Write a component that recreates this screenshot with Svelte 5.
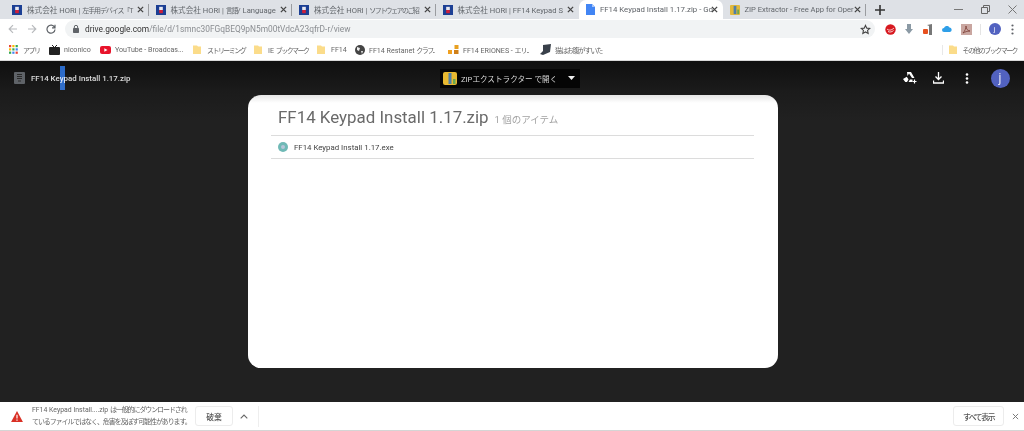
<script>
  const tabs = [
    { pre: '株式会社 HORI | ', jp: '左手用デバイス「T', icon: 'hori' },
    { pre: '株式会社 HORI | ', jp: '言語', post: '/ Language', icon: 'hori' },
    { pre: '株式会社 HORI | ', jp: 'ソフトウェアのご紹', tight: true, icon: 'hori' },
    { pre: '株式会社 HORI | ', post: 'FF14 Keypad S', icon: 'hori' },
    { pre: 'FF14 Keypad Install 1.17.zip - Go', icon: 'doc', active: true },
    { pre: 'ZIP Extractor - Free App for Oper', icon: 'zip' }
  ];
  const marks = [
    { label: 'niconico', icon: 'tv', w: 51 },
    { label: 'YouTube - Broadcas...', icon: 'yt', w: 93 },
    { jp: 'ストリーミング', tight: true, icon: 'folder', w: 61 },
    { label: 'IE ', jp: 'ブックマーク', tight: true, icon: 'folder', w: 63 },
    { label: 'FF14', icon: 'folder', w: 38 },
    { label: 'FF14 Restanet ', jp: 'クラフ...', tight: true, icon: 'globe', w: 93 },
    { label: 'FF14 ERIONES - ', jp: 'エリ...', icon: 'blocks', w: 92 },
    { jp: '猫はお腹がすいた', icon: 'cat', w: 80 }
  ];
</script>

{#snippet folder()}
  <svg class="folder" width="8" height="9" viewBox="0 0 8 9"><path d="M0 .5h4l1 1h3V9H0z" fill="#fbdc8a" /></svg>
{/snippet}

<div class="page">
  <div class="tabbar">
    {#each tabs as t}
      <div class="tab" class:active={t.active}>
        {#if t.icon === 'hori'}
          <svg width="10" height="10" viewBox="0 0 11 11"><rect width="11" height="11" fill="#1c3f94" /><rect x="3.5" y="2" width="4" height="3.5" fill="#e8e8f0" /><rect x="3.5" y="5.5" width="4" height="3.5" fill="#d0203a" /></svg>
        {:else if t.icon === 'doc'}
          <svg width="9" height="11" viewBox="0 0 9 11"><path d="M0 0h6l3 3v8H0z" fill="#4285f4" /><path d="M6 0l3 3H6z" fill="#a9c6fa" /></svg>
        {:else}
          <svg width="10" height="10" viewBox="0 0 11 11"><rect width="11" height="11" rx="1" fill="#e2b93b" /><rect x="4" y="1" width="3" height="9" fill="#4f7fa8" /><rect x="8" y="5" width="2" height="5" fill="#6aa84f" /></svg>
        {/if}
        <span class="tab-title">{t.pre}{#if t.jp}<span class="jp" class:tight={t.tight}>{t.jp}</span>{/if}{t.post ?? ''}</span>
        <svg class="x" width="7" height="7" viewBox="0 0 8 8"><path d="M1 1l6 6M7 1L1 7" stroke="#444" stroke-width="1.500" /></svg>
      </div>
    {/each}
    <svg class="plus" width="10" height="10" viewBox="0 0 10 10"><path d="M5 0v10M0 5h10" stroke="#333" stroke-width="1.6" /></svg>
    <div class="win">
      <svg width="9" height="9" viewBox="0 0 9 9"><path d="M0 4.5h9" stroke="#777" /></svg>
      <svg width="9" height="9" viewBox="0 0 9 9"><path d="M.5 2.5h6v6h-6zM2.5 2.5v-2h6v6h-2" fill="none" stroke="#666" /></svg>
      <svg width="9" height="9" viewBox="0 0 9 9"><path d="M.5.5l8 8M8.5.5l-8 8" stroke="#777" /></svg>
    </div>
  </div>

  <div class="toolbar">
    <div class="nav">
      <svg width="10" height="10" viewBox="0 0 10 10"><path d="M9 5H1.5M5 1.2L1.2 5 5 8.8" fill="none" stroke="#b8babd" stroke-width="1.2" /></svg>
      <svg width="10" height="10" viewBox="0 0 10 10"><path d="M1 5h7.5M5 1.2L8.8 5 5 8.8" fill="none" stroke="#b8babd" stroke-width="1.2" /></svg>
      <svg width="10" height="10" viewBox="0 0 10 10"><path d="M8.5 3.2A4 4 0 1 0 9 5.5M9 .8v3H6" fill="none" stroke="#5f6368" stroke-width="1.2" /></svg>
    </div>
    <div class="omni">
      <svg width="6" height="8" viewBox="0 0 6 8"><rect y="3" width="6" height="5" rx=".7" fill="#5f6368" /><path d="M1.3 3.5V2a1.7 1.7 0 0 1 3.4 0v1.5" fill="none" stroke="#5f6368" /></svg>
      <span class="url">drive.google.com<span class="dim">/file/d/1smnc30FGqBEQ9pN5m00tVdcA23qfrD-r/view</span></span>
      <svg width="11" height="11" viewBox="0 0 24 24"><path d="M12 3l2.8 6 6.5.7-4.8 4.4 1.3 6.4L12 17.3l-5.800 3.200 1.300-6.400-4.800-4.400 6.500-.7z" fill="none" stroke="#444" stroke-width="2.4" /></svg>
    </div>
    <div class="ext">
      <span class="cell"><svg width="11" height="11" viewBox="0 0 11 11"><circle cx="5.5" cy="5.5" r="5.2" fill="#d71920" /><path d="M2 5c2 2 5 1 7-1M3 7.5c2 1 4 .5 5.500-1" stroke="#fff" fill="none" stroke-width=".8" /></svg></span>
      <span class="cell"><svg width="8" height="10" viewBox="0 0 8 10"><path d="M2 0h4v5h2L4 10 0 5h2z" fill="#8b9aa5" /></svg></span>
      <span class="cell"><svg width="10" height="11" viewBox="0 0 10 11"><path d="M4 1l5-1v11H6V2z" fill="#777" /><rect x="0" y="5" width="5" height="5" rx="1" fill="#e8501f" /></svg></span>
      <span class="cell"><svg width="10" height="6" viewBox="0 0 10 6"><path d="M2 6a2 2 0 0 1 0-4 3 3 0 0 1 5.500-.5A2.300 2.300 0 0 1 8 6z" fill="#2f9fe8" /></svg></span>
      <span class="cell"><svg width="11" height="11" viewBox="0 0 11 11"><rect width="11" height="11" fill="#c9a6a0" /><path d="M2 9c2-2 3-5 3-7 0 3 2 5 4 5-3 0-5 1-7 2z" fill="none" stroke="#7a3b32" stroke-width=".8" /></svg></span>
      <span class="bar"></span>
      <span class="avatar small">j</span>
      <svg class="menu" width="3" height="11" viewBox="0 0 3 11"><circle cx="1.500" cy="1.500" r="1.100" fill="#5f6368" /><circle cx="1.500" cy="5.500" r="1.100" fill="#5f6368" /><circle cx="1.500" cy="9.500" r="1.100" fill="#5f6368" /></svg>
    </div>
  </div>

  <div class="bookmarks">
    <div class="mark apps">
      <svg width="9" height="9" viewBox="0 0 9 9">
        {#each [0, 3.3, 6.6] as y, r}
          {#each [0, 3.3, 6.6] as x, c}
            <rect {x} {y} width="2.2" height="2.2" fill={['#ea4335', '#fbbc05', '#34a853', '#4285f4'][(r + c) % 4]} />
          {/each}
        {/each}
      </svg>
      <span class="jp tight">アプリ</span>
    </div>
    {#each marks as m}
      <div class="mark" style="width:{m.w}px">
        {#if m.icon === 'folder'}
          {@render folder()}
        {:else if m.icon === 'tv'}
          <svg width="11" height="10" viewBox="0 0 11 10"><rect y="2" width="11" height="8" rx="1" fill="#222" /><path d="M3 0l2 2M8 0L6 2" stroke="#222" /></svg>
        {:else if m.icon === 'yt'}
          <svg width="11" height="8" viewBox="0 0 11 8"><rect width="11" height="8" rx="2" fill="#e8132b" /><path d="M4.300 2.200v3.600L7.500 4z" fill="#fff" /></svg>
        {:else if m.icon === 'globe'}
          <svg width="10" height="10" viewBox="0 0 10 10"><circle cx="5" cy="5" r="5" fill="#444" /><path d="M2 2l3 1-1 3-2-1zM6 6l2 0-1 3z" fill="#eee" /></svg>
        {:else if m.icon === 'blocks'}
          <svg width="11" height="10" viewBox="0 0 11 10"><rect x="6.500" y="0" width="4" height="4" fill="#e8a020" /><rect x="0" y="5" width="4" height="4" fill="#f0a020" /><rect x="6" y="5" width="4.500" height="4" fill="#d08018" /></svg>
        {:else}
          <svg width="11" height="11" viewBox="0 0 11 11"><path d="M3 1l8-1-1 8-7 3-3-1 3-3z" fill="#39404a" /></svg>
        {/if}
        <span>{m.label ?? ''}{#if m.jp}<span class="jp" class:tight={m.tight}>{m.jp}</span>{/if}</span>
      </div>
    {/each}
    <div class="others">
      {@render folder()}
      <span class="jp tight">その他のブックマーク</span>
    </div>
  </div>

  <div class="viewer">
    <header class="vhead">
      <div class="vfile">
        <svg width="11" height="12" viewBox="0 0 11 12"><rect width="11" height="12" rx="1" fill="#5f6368" /><path d="M3 2.500h5M3 4.500h5M3 6.500h5M4 9h3" stroke="#2a2a2a" /></svg>
        <span>FF14 Keypad Install 1.17.zip</span>
        <i class="caret"></i>
      </div>
      <div class="open">
        <svg width="14" height="13" viewBox="0 0 14 13"><rect width="14" height="13" rx="2" fill="#e8b931" /><rect x="5.500" y="1" width="3" height="11" fill="#4f7fa8" /><rect x="10" y="7" width="2.500" height="5" fill="#6aa84f" /></svg>
        <span>ZIPエクストラクター で開く</span>
        <i class="sep"></i>
        <svg width="7" height="4" viewBox="0 0 7 4"><path d="M0 0h7L3.500 4z" fill="#eee" /></svg>
      </div>
      <div class="vactions">
        <svg width="14" height="12" viewBox="0 0 14 12"><path d="M4 0h4l3.500 6H9L6 1.500 4.500 4zM3.800 4.800L5.500 7.500 4 10H2.300L0 7zM5.500 10l1.500-2.500h2.500V10z" fill="#fff" /><path d="M11.500 7.500v4M9.500 9.500h4" stroke="#fff" stroke-width="1.200" /></svg>
        <svg width="11" height="12" viewBox="0 0 11 12"><path d="M5.500 0v7M2.500 4.500l3 3 3-3M.5 8.500v2.500h10V8.500" fill="none" stroke="#fff" stroke-width="1.300" /></svg>
        <svg class="dots" width="4" height="11" viewBox="0 0 4 11"><circle cx="2" cy="1.500" r="1.300" fill="#fff" /><circle cx="2" cy="5.500" r="1.300" fill="#fff" /><circle cx="2" cy="9.500" r="1.300" fill="#fff" /></svg>
        <span class="avatar big">j</span>
      </div>
    </header>

    <main class="card">
      <div class="card-title">
        <h1>FF14 Keypad Install 1.17.zip</h1>
        <span>1 個のアイテム</span>
      </div>
      <div class="row">
        <svg width="10" height="10" viewBox="0 0 10 10"><circle cx="5" cy="5" r="5" fill="#6fb9b6" /><circle cx="5" cy="5" r="2" fill="#b6c6d8" /></svg>
        <span>FF14 Keypad Install 1.17.exe</span>
      </div>
    </main>
  </div>

  <footer class="dlbar">
    <svg class="warn" width="12" height="11" viewBox="0 0 14 13"><path d="M7 0l7 13H0z" fill="#d93025" /><path d="M6.300 4.500h1.400v4.500H6.300zM6.300 10h1.400v1.400H6.300z" fill="#fff" /></svg>
    <p>FF14 Keypad Install....zip <span class="jp">は一般的にダウンロードされ</span><br /><span class="jp">ているファイルではなく、危害を及ぼす可能性があります。</span></p>
    <button>破棄</button>
    <svg class="chev" width="8" height="5" viewBox="0 0 8 5"><path d="M.7 4.300L4 1l3.300 3.300" fill="none" stroke="#666" stroke-width="1.100" /></svg>
    <i class="dlsep"></i>
    <button class="all">すべて表示</button>
    <svg class="dlx" width="7" height="7" viewBox="0 0 8 8"><path d="M1 1l6 6M7 1L1 7" stroke="#777" stroke-width="1.100" /></svg>
  </footer>
</div>

<style>
  :global(body) {
    margin: 0;
    background: #fff;
  }
  .page {
    width: 1024px;
    height: 431px;
    display: flex;
    flex-direction: column;
    overflow: hidden;
    font-family: Roboto, "Noto Sans CJK JP", sans-serif;
    color: #555;
    filter: blur(0.35px);
  }
  svg {
    flex: none;
  }
  .jp {
    font-size: 7px;
    letter-spacing: -1.100px;
  }
  .jp.tight {
    letter-spacing: -1.550px;
  }

  .tabbar {
    height: 19px;
    padding-left: 5px;
    background: #dee1e6;
    display: flex;
    align-items: center;
    flex: none;
  }
  .tab {
    width: 143.500px;
    box-sizing: border-box;
    height: 19px;
    padding: 0 5px 0 7px;
    display: flex;
    align-items: center;
    gap: 5px;
    font-size: 7.600px;
    color: #62666b;
    position: relative;
    flex: none;
  }
  .tab::after {
    content: '';
    position: absolute;
    right: 0;
    top: 4px;
    height: 12px;
    width: 1px;
    background: #9a9ca0;
  }
  .tab:nth-child(4)::after,
  .tab:nth-child(5)::after {
    display: none;
  }
  .tab.active {
    background: #fff;
    border-radius: 7px 7px 0 0;
    color: #5f6368;
    font-size: 7.800px;
  }
  .tab-title {
    flex: 1;
    min-width: 0;
    white-space: nowrap;
  }
  .plus {
    margin-left: 9px;
  }
  .win {
    margin-left: auto;
    width: 63px;
    margin-right: 7px;
    display: flex;
    justify-content: space-between;
  }

  .toolbar {
    height: 20px;
    padding-left: 8px;
    display: flex;
    align-items: center;
    background: #fff;
    flex: none;
  }
  .nav {
    display: flex;
    gap: 9px;
    width: 58px;
  }
  .omni {
    width: 810px;
    height: 18px;
    box-sizing: border-box;
    margin-left: -1px;
    padding: 0 4px 0 8px;
    border-radius: 9px;
    background: #f1f3f4;
    display: flex;
    align-items: center;
    gap: 6px;
  }
  .url {
    font-size: 8.350px;
    color: #333;
    flex: 1;
  }
  .dim {
    color: #8a8d91;
  }
  .ext {
    display: flex;
    align-items: center;
    margin-left: 5.500px;
  }
  .cell {
    width: 19px;
    display: flex;
    align-items: center;
    justify-content: center;
  }
  .bar {
    width: 1px;
    height: 11px;
    margin: 0 8px 0 4px;
    background: #e4e4e4;
  }
  .menu {
    margin-left: 10.500px;
  }
  .avatar {
    border-radius: 50%;
    background: #5262c0;
    color: #e8eaf6;
    display: flex;
    align-items: center;
    justify-content: center;
  }
  .avatar.big {
    width: 19px;
    height: 19px;
    margin-left: 6px;
    font-size: 12px;
  }
  .avatar.small {
    width: 12px;
    height: 12px;
    font-size: 8px;
  }

  .bookmarks {
    height: 21px;
    padding-left: 9px;
    display: flex;
    align-items: center;
    background: #fff;
    flex: none;
    font-size: 7.100px;
    color: #666;
    border-bottom: 1px solid #d8d8d8;
    white-space: nowrap;
  }
  .mark {
    display: flex;
    align-items: center;
    gap: 4px;
    flex: none;
  }
  .mark.apps {
    width: 40px;
    gap: 5px;
  }
  .folder {
    margin-right: 2px;
  }
  .others {
    margin-left: auto;
    padding: 0 7px 0 6px;
    display: flex;
    gap: 4px;
    align-items: center;
    border-left: 1px solid #e8e8e8;
  }

  .viewer {
    flex: 1;
    min-height: 0;
    display: flex;
    flex-direction: column;
    background: #1f1f1f;
    background-image: linear-gradient(#0f0f0f, #1b1b1b 30px, #212121 60px);
  }
  .vhead {
    height: 34px;
    display: grid;
    grid-template-columns: 1fr auto 1fr;
    align-items: center;
    flex: none;
  }
  .vfile {
    position: relative;
    padding-left: 14px;
    display: flex;
    align-items: center;
    gap: 6px;
    font-size: 7.900px;
    font-weight: 500;
    color: #ddd;
  }
  .caret {
    position: absolute;
    left: 60px;
    top: -6px;
    width: 5px;
    height: 24px;
    background: #1b5fc4;
    mix-blend-mode: screen;
  }
  .open {
    height: 19px;
    width: 140px;
    box-sizing: border-box;
    margin-right: 4px;
    padding: 0 5px 0 3px;
    background: #050505;
    display: flex;
    align-items: center;
    gap: 4px;
    font-size: 7.600px;
    color: #d8d8d8;
    white-space: nowrap;
  }
  .open .sep {
    width: 1px;
    height: 14px;
    background: #444;
    margin: 0 3px 0 auto;
  }
  .vactions {
    display: flex;
    align-items: center;
    justify-content: flex-end;
    gap: 16px;
    padding-right: 14.500px;
  }
  .dots {
    margin-left: 5px;
  }

  .card {
    width: 530px;
    height: 273px;
    margin-left: 248px;
    box-sizing: border-box;
    padding: 0 24px 0 23px;
    background: #fff;
    background-image: linear-gradient(#e6e6e6, #fff 8px);
    border-radius: 13px;
  }
  .card-title {
    height: 41px;
    box-sizing: border-box;
    padding: 4px 0 0 7px;
    display: flex;
    align-items: center;
    gap: 6px;
    border-bottom: 1px solid #dcdcdc;
  }
  .card-title h1 {
    margin: 0;
    font-size: 16.900px;
    font-weight: 400;
    color: #6a6a6a;
    white-space: nowrap;
  }
  .card-title span {
    margin-top: 4px;
    font-size: 9.500px;
    color: #a2a2a2;
  }
  .row {
    height: 23px;
    box-sizing: border-box;
    padding-left: 7px;
    display: flex;
    align-items: center;
    gap: 6px;
    font-size: 7.850px;
    color: #444;
    border-bottom: 1px solid #dcdcdc;
  }

  .dlbar {
    height: 29px;
    flex: none;
    box-sizing: border-box;
    padding-left: 11px;
    display: flex;
    align-items: center;
    background: #fff;
    border-bottom: 1px solid #d5d5d5;
  }
  .dlbar p {
    margin: 0 0 0 9px;
    width: 163px;
    font-size: 6.900px;
    line-height: 12.500px;
    color: #666;
    white-space: nowrap;
  }
  .dlbar button {
    width: 38px;
    height: 20px;
    padding: 0;
    background: #fff;
    border: 1px solid #ececec;
    border-radius: 3px;
    font: 500 7.800px Roboto, "Noto Sans CJK JP", sans-serif;
    color: #555;
    white-space: nowrap;
  }
  .chev {
    margin-left: 7px;
  }
  .dlsep {
    width: 1px;
    height: 21px;
    margin-left: 10px;
    background: #eee;
  }
  .dlbar .all {
    width: 51px;
    margin-left: auto;
    letter-spacing: -1.400px;
  }
  .dlx {
    margin: 0 5.500px 0 7.500px;
  }
</style>
